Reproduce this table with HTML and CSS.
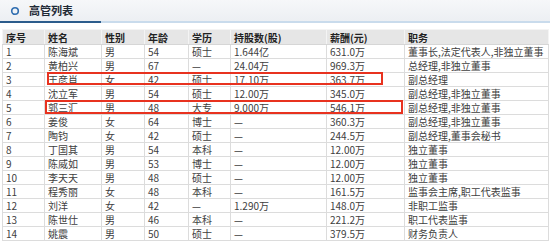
FILE: index.html
```html
<!DOCTYPE html>
<html lang="zh-CN">
<head>
<meta charset="utf-8">
<title>高管列表</title>
<link rel="stylesheet" href="styles.css">
</head>
<body>
<div class="panel">
  <div class="title-bar">
    <svg class="ring" width="10" height="10" viewBox="0 0 10 10"><circle cx="5" cy="5" r="3.3" fill="none" stroke="#2f6db0" stroke-width="1.6"/></svg>
    <span class="title">高管列表</span>
  </div>
  <div class="rule"><span class="rule-dark"></span><span class="rule-light"></span></div>
  <div class="table-wrap">
    <table class="grid">
      <colgroup>
        <col class="c1"><col class="c2"><col class="c3"><col class="c4"><col class="c5"><col class="c6"><col class="c7"><col class="c8">
      </colgroup>
      <thead>
        <tr><th>序号</th><th>姓名</th><th>性别</th><th>年龄</th><th>学历</th><th>持股数(股)</th><th>薪酬(元)</th><th>职务</th></tr>
      </thead>
      <tbody>
        <tr><td>1</td><td>陈海斌</td><td>男</td><td>54</td><td>硕士</td><td>1.644亿</td><td>631.0万</td><td>董事长,法定代表人,非独立董事</td></tr>
        <tr><td>2</td><td>黄柏兴</td><td>男</td><td>67</td><td>—</td><td>24.04万</td><td>969.3万</td><td>总经理,非独立董事</td></tr>
        <tr><td>3</td><td>王彦肖</td><td>女</td><td>42</td><td>硕士</td><td>17.10万</td><td>363.7万</td><td>副总经理</td></tr>
        <tr><td>4</td><td>沈立军</td><td>男</td><td>54</td><td>硕士</td><td>12.00万</td><td>345.0万</td><td>副总经理,非独立董事</td></tr>
        <tr><td>5</td><td>郭三汇</td><td>男</td><td>48</td><td>大专</td><td>9.000万</td><td>546.1万</td><td>副总经理,非独立董事</td></tr>
        <tr><td>6</td><td>姜俊</td><td>女</td><td>64</td><td>博士</td><td>—</td><td>360.3万</td><td>副总经理,非独立董事</td></tr>
        <tr><td>7</td><td>陶钧</td><td>女</td><td>42</td><td>硕士</td><td>—</td><td>244.5万</td><td>副总经理,董事会秘书</td></tr>
        <tr><td>8</td><td>丁国其</td><td>男</td><td>54</td><td>本科</td><td>—</td><td>12.00万</td><td>独立董事</td></tr>
        <tr><td>9</td><td>陈威如</td><td>男</td><td>53</td><td>博士</td><td>—</td><td>12.00万</td><td>独立董事</td></tr>
        <tr><td>10</td><td>李天天</td><td>男</td><td>48</td><td>硕士</td><td>—</td><td>12.00万</td><td>独立董事</td></tr>
        <tr><td>11</td><td>程秀丽</td><td>女</td><td>48</td><td>本科</td><td>—</td><td>161.5万</td><td>监事会主席,职工代表监事</td></tr>
        <tr><td>12</td><td>刘洋</td><td>女</td><td>42</td><td>—</td><td>1.290万</td><td>148.0万</td><td>非职工监事</td></tr>
        <tr><td>13</td><td>陈世仕</td><td>男</td><td>46</td><td>本科</td><td>—</td><td>221.2万</td><td>职工代表监事</td></tr>
        <tr><td>14</td><td>姚震</td><td>男</td><td>50</td><td>硕士</td><td>—</td><td>379.5万</td><td>财务负责人</td></tr>
      </tbody>
    </table>
    <div class="mark mark-a"></div>
    <div class="mark mark-b"></div>
  </div>
</div>
</body>
</html>
```
FILE: styles.css
```css
html, body {
  margin: 0;
  padding: 0;
  background: #ffffff;
}
body {
  width: 550px;
  height: 243px;
  overflow: hidden;
  font-family: "Noto Sans CJK SC", "Liberation Sans", sans-serif;
  font-size: 10px;
  color: #333333;
}
.title-bar {
  height: 21px;
  display: flex;
  align-items: center;
  padding-left: 10px;
  gap: 9px;
  background: linear-gradient(#f6f7f9, #eceff3);
}
.ring {
  display: block;
}
.title {
  font-size: 11px;
  font-weight: bold;
  color: #1f2a36;
  line-height: 21px;
}
.rule {
  display: flex;
  height: 2px;
}
.rule-dark {
  width: 101px;
  background: #2c5c8c;
}
.rule-light {
  flex: 1;
  background: #c9dbec;
}
.table-wrap {
  position: relative;
  margin: 6px 2px 0 2px;
}
.grid {
  width: 546px;
  table-layout: fixed;
  border-collapse: collapse;
}
.c1 { width: 42px; }
.c2 { width: 57px; }
.c3 { width: 43px; }
.c4 { width: 44px; }
.c5 { width: 42px; }
.c6 { width: 96px; }
.c7 { width: 78px; }
.c8 { width: 144px; }
.grid th,
.grid td {
  border: 1px solid #dcdcdc;
  padding: 0 0 0 3px;
  text-align: left;
  white-space: nowrap;
  overflow: hidden;
}
.grid thead tr {
  height: 15px;
}
.grid tbody tr {
  height: 14px;
}
.grid th {
  line-height: 13px;
  background: #e6e6e6;
  font-weight: bold;
  color: #222222;
  border-color: #f4f4f4 #f4f4f4 #d6d6d6 #f4f4f4;
}
.grid td {
  line-height: 12px;
  color: #404040;
}
.mark {
  position: absolute;
  border: 2px solid #e8321f;
  box-sizing: border-box;
  pointer-events: none;
}
.mark-a {
  left: 45px;
  top: 43px;
  width: 336px;
  height: 13px;
}
.mark-b {
  left: 43px;
  top: 71px;
  width: 358px;
  height: 14px;
}
```
